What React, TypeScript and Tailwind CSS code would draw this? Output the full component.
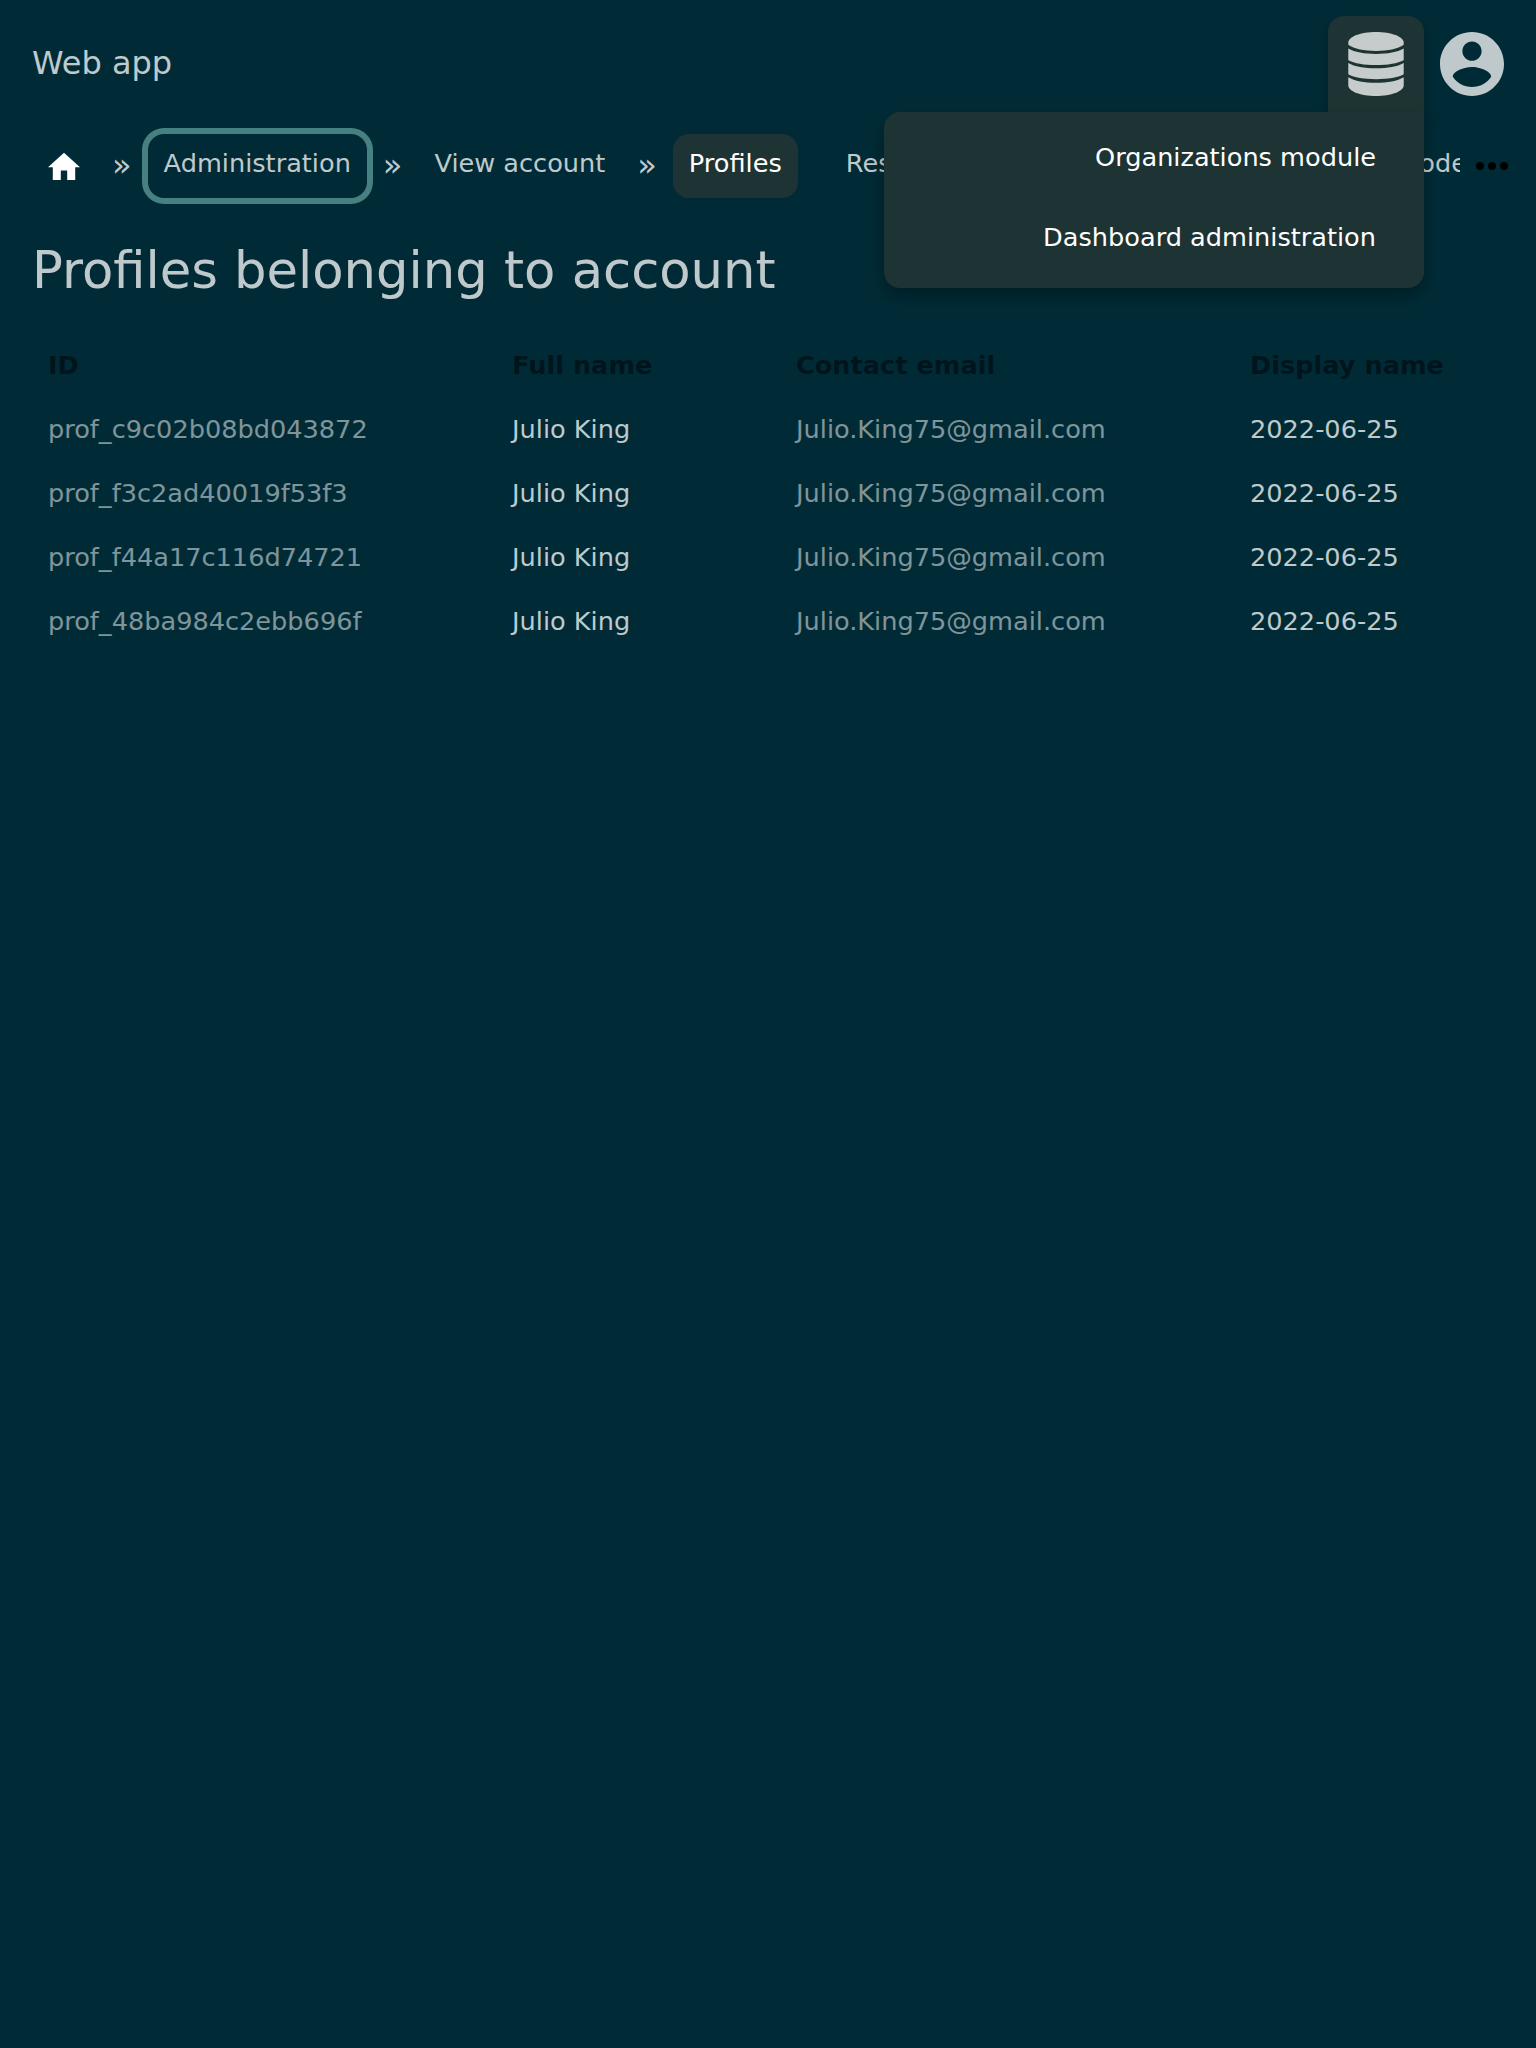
const links = ["Administration", "View account", "Profiles"];

const profiles = [
  "prof_c9c02b08bd043872",
  "prof_f3c2ad40019f53f3",
  "prof_f44a17c116d74721",
  "prof_48ba984c2ebb696f",
];

function DatabaseIcon() {
  return (
    <svg viewBox="-0.3 0 56.6 64" preserveAspectRatio="none" className="h-16 w-14 shrink-0" fill="currentColor">
      <path d="M28 0C43.500 0 56 4.700 56 10.500V12.700C50 16.800 40 18.900 28 18.900S6 16.800 0 12.700V10.500C0 4.700 12.500 0 28 0Z" />
      <path d="M0 16.600C6.500 20.300 16 22 28 22S49.500 20.300 56 16.600V28.200C50 31.400 40 33 28 33S6 31.400 0 28.200Z" />
      <path d="M0 31C6.500 34.700 16 36.300 28 36.300S49.500 34.700 56 31V42.300C50 45.600 40 47.200 28 47.200S6 45.600 0 42.300Z" />
      <path d="M0 45.200C6.500 49 16 50.700 28 50.700S49.500 49 56 45.200V53.500C56 59.300 43.500 64 28 64S0 59.300 0 53.500Z" />
    </svg>
  );
}

function AccountIcon() {
  return (
    <svg viewBox="2 2 20 20" className="size-16" fill="currentColor">
      <path d="M12 2C6.480 2 2 6.480 2 12s4.480 10 10 10 10-4.480 10-10S17.520 2 12 2zm0 3c1.660 0 3 1.340 3 3s-1.340 3-3 3-3-1.340-3-3 1.340-3 3-3zm0 14.200c-2.500 0-4.710-1.280-6-3.220.03-1.990 4-3.080 6-3.080 1.990 0 5.970 1.090 6 3.080-1.290 1.940-3.500 3.220-6 3.220z" />
    </svg>
  );
}

function Separator() {
  return <span className="pt-[18px] text-[32px] leading-[38px]">»</span>;
}

export default function App() {
  return (
    <div className="min-h-[2048px] w-[1536px] overflow-hidden bg-[#002b36] font-['DejaVu_Sans',sans-serif] text-[25.6px] text-white/75">
      <header className="flex h-32 items-center justify-between px-4">
        <div className="pb-0.5 pl-4 text-[32px] leading-[48px]">Web app</div>
        <div className="flex">
          <div className="relative z-10 flex size-24 items-center justify-center rounded-t-2xl bg-[#1e3333] shadow-[0_8px_16px_rgba(0,0,0,0.2)]">
            <DatabaseIcon />
            <div className="absolute top-24 right-0 flex h-44 w-[540px] flex-col rounded-b-2xl rounded-tl-2xl bg-[#1e3333] pr-12 text-right text-white shadow-[0_8px_16px_rgba(0,0,0,0.3)]">
              <a className="pt-6 leading-[42px]">Organizations module</a>
              <a className="pt-[38px] leading-[42px]">Dashboard administration</a>
            </div>
          </div>
          <div className="flex size-24 items-center justify-center">
            <AccountIcon />
          </div>
        </div>
      </header>

      <nav className="flex h-20 items-start pl-8">
        <div className="flex h-16 w-[1428px] items-start gap-4 whitespace-nowrap">
          <a className="flex h-[70px] w-16 shrink-0 justify-center pt-6">
            <svg viewBox="2 2.500 20 17.500" className="h-7 w-8 text-white" fill="currentColor">
              <path d="M10 20v-6h4v6h5v-8h3L12 3 2 12h3v8z" />
            </svg>
          </a>
          <Separator />
          <a className="mt-1.5 h-16 rounded-2xl px-4 leading-[58px] ring-6 ring-[#478080]">{links[0]}</a>
          <Separator />
          <a className="mt-1.5 h-16 px-4 leading-[58px]">{links[1]}</a>
          <Separator />
          <a className="mt-1.5 h-16 rounded-2xl bg-[#1e3333] px-4 leading-[58px] text-white">{links[2]}</a>
          <div className="mt-1.5 ml-4 flex h-16 min-w-0 flex-1 justify-between overflow-hidden pl-4 leading-[58px]">
            <a>Resources</a>
            <a className="-mr-[7px]">Mode</a>
          </div>
        </div>
        <svg viewBox="4 10 16 4" className="mt-[34px] ml-4 h-2 w-8 text-black" fill="currentColor">
          <path d="M6 10a2 2 0 1 0 0 4 2 2 0 0 0 0-4zm12 0a2 2 0 1 0 0 4 2 2 0 0 0 0-4zm-6 0a2 2 0 1 0 0 4 2 2 0 0 0 0-4z" />
        </svg>
      </nav>

      <main className="px-8">
        <h1 className="mt-6 text-[51.200px] leading-[76px]">Profiles belonging to account</h1>
        <table className="mt-[25px] w-full table-fixed text-left">
          <colgroup>
            <col className="w-[464px]" />
            <col className="w-[284px]" />
            <col className="w-[454px]" />
            <col />
          </colgroup>
          <thead className="text-black/50">
            <tr className="h-16">
              <th className="p-0 pl-4">ID</th>
              <th className="p-0 pl-4">Full name</th>
              <th className="p-0 pl-4">Contact email</th>
              <th className="p-0 pl-4">Display name</th>
            </tr>
          </thead>
          <tbody>
            {profiles.map((id) => (
              <tr key={id} className="h-16">
                <td className="p-0 pl-4 text-white/50">{id}</td>
                <td className="p-0 pl-4">Julio King</td>
                <td className="p-0 pl-4 text-white/50">Julio.King75@gmail.com</td>
                <td className="p-0 pl-4">2022-06-25</td>
              </tr>
            ))}
          </tbody>
        </table>
      </main>
    </div>
  );
}
